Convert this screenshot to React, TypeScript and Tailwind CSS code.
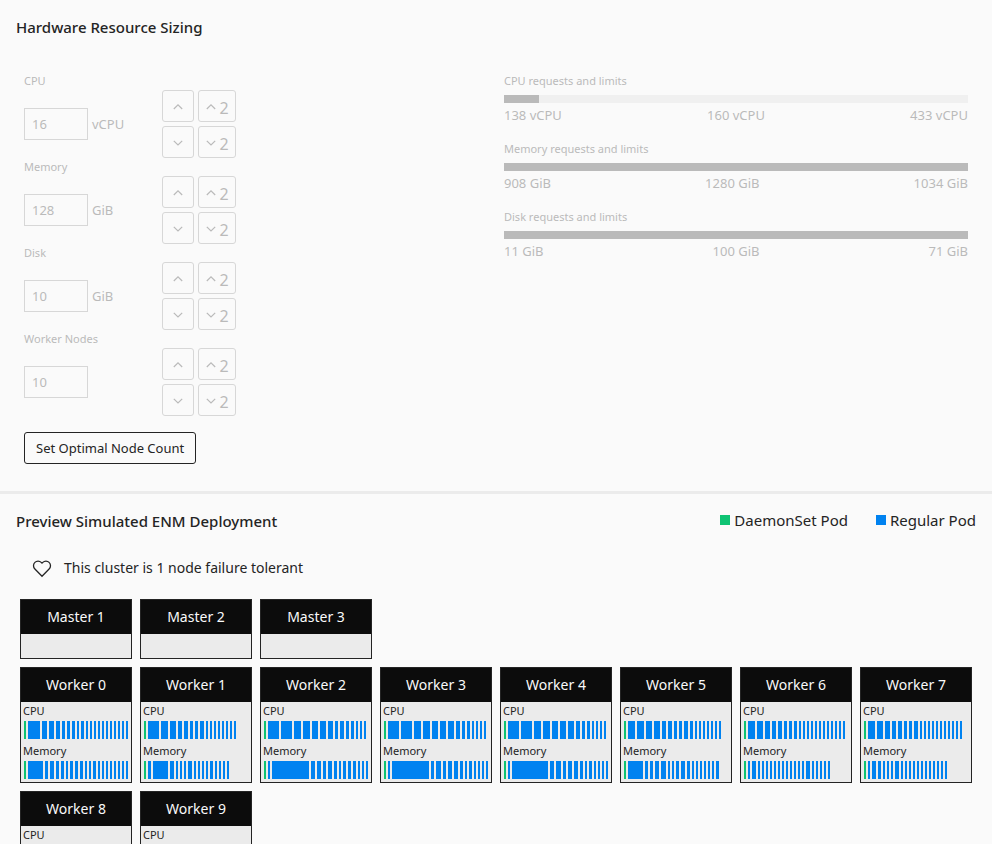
import React from "react";

type Resource = { id: string; label: string; value: string; unit: string };

const resources: Resource[] = [
  { id: "cpu", label: "CPU", value: "16", unit: "vCPU" },
  { id: "memory", label: "Memory", value: "128", unit: "GiB" },
  { id: "disk", label: "Disk", value: "10", unit: "GiB" },
  { id: "nodes", label: "Worker Nodes", value: "10", unit: "" },
];

const meters = [
  { label: "CPU requests and limits", min: "138 vCPU", mid: "160 vCPU", max: "433 vCPU", percent: 7.5 },
  { label: "Memory requests and limits", min: "908 GiB", mid: "1280 GiB", max: "1034 GiB", percent: 100 },
  { label: "Disk requests and limits", min: "11 GiB", mid: "100 GiB", max: "71 GiB", percent: 100 },
];

const small = (count: number): number[] => Array(count).fill(2);

// Pod widths in pixels; the daemon set pod is drawn ahead of them.
const workers: { cpu: number[]; memory: number[] }[] = [
  { cpu: [12, 5, 5, 4, 3, 3, 3, 2, 3, ...small(11)], memory: [15, 3, 4, 3, 3, 2, 3, 3, 3, 2, 2, 3, ...small(8)] },
  { cpu: [11, 7, 6, 4, 4, 3, 3, 4, ...small(8)], memory: [3, 15, 4, 2, 2, 2, 4, 2, 2, 2, 2, 3, ...small(4)] },
  { cpu: [11, 11, 7, 7, 6, 6, 5, 3, 4, 3, 3, ...small(3)], memory: [2, 37, 4, 4, 3, 4, 3, 2, 3, 3, 3, ...small(3)] },
  { cpu: [11, 11, 7, 7, 6, 6, 6, 4, 3, 3, ...small(4)], memory: [2, 37, 3, 5, 3, 4, 4, 3, 2, 3, ...small(4)] },
  { cpu: [11, 11, 7, 7, 6, 6, 6, 4, 3, 3, ...small(4)], memory: [2, 36, 4, 5, 3, 4, 4, 3, 2, 3, ...small(4)] },
  { cpu: [7, 7, 6, 6, 4, 4, 3, 3, 4, 3, ...small(7)], memory: [15, 3, 3, 4, 5, 2, 2, 3, 4, 3, ...small(6), 3] },
  { cpu: [7, 6, 5, 4, 4, 3, 3, 3, ...small(12)], memory: [2, 4, ...small(12), 4, ...small(5)] },
  { cpu: [7, 6, 5, 4, 4, 3, 3, 4, ...small(11)], memory: [2, 4, 3, 2, 2, 2, 4, ...small(12)] },
  { cpu: [7, 6, 5, 4, 4, 3, 3, 3, ...small(11)], memory: [2, 4, 3, 2, 2, 2, 4, ...small(11)] },
  { cpu: [7, 6, 5, 4, 4, 3, 3, 3, ...small(11)], memory: [2, 4, 3, 2, 2, 2, 4, ...small(11)] },
];

function Chevron({ down = false }: { down?: boolean }) {
  return (
    <svg width="16" height="16" viewBox="0 0 16 16" fill="none" stroke="currentColor" strokeWidth="1.2" aria-hidden="true">
      <path d={down ? "M3.800 6.800l4.200 4.200 4.200-4.200" : "M3.800 11l4.200-4.200 4.200 4.200"} />
    </svg>
  );
}

function StepButton({ down = false, double = false, name }: { down?: boolean; double?: boolean; name: string }) {
  return (
    <button
      type="button"
      disabled
      aria-label={`${down ? "Decrease" : "Increase"} ${name}${double ? " by a factor of 2" : ""}`}
      className={`flex h-8 items-center justify-center rounded-[3px] border border-[#d7d7d7] text-base leading-6 ${double ? "w-[38px] pr-[2px]" : "w-8"}`}
    >
      <Chevron down={down} />
      {double && <span className="pt-1">2</span>}
    </button>
  );
}

function ResourceRow({ id, label, value, unit }: Resource) {
  return (
    <div className="flex h-[86px]">
      <div className="w-[138px]">
        <label htmlFor={id} className="block text-[11px] leading-4">
          {label}
        </label>
        <div className="mt-[19px] flex items-center gap-1 text-[13px] leading-5">
          <input id={id} disabled defaultValue={value} className="h-8 w-16 border border-[#d7d7d7] px-[7px]" />
          <span>{unit}</span>
        </div>
      </div>
      <div className="grid content-start grid-cols-[auto_auto] gap-1 pt-[17px]">
        <StepButton name={label} />
        <StepButton name={label} double />
        <StepButton name={label} down />
        <StepButton name={label} down double />
      </div>
    </div>
  );
}

function PodStrip({ label, pods }: { label: string; pods: number[] }) {
  return (
    <div className="h-10 pl-[3px]">
      <div className="-ml-px pb-[2px] text-[11px] leading-[17px]">{label}</div>
      <div className="flex h-[18px] gap-[2px]">
        <span className="w-[2px] shrink-0 bg-[#0fc373]" />
        {pods.map((width, i) => (
          <span key={i} className="shrink-0 bg-[#0082f0]" style={{ width }} />
        ))}
      </div>
    </div>
  );
}

function NodeCard({ title, children }: { title: string; children?: React.ReactNode }) {
  return (
    <article className="w-28 border border-[#242424] bg-[#ebebeb]">
      <h3 className="bg-[#0c0c0c] text-center text-[14px] leading-[34px] text-[#fafafa]">{title}</h3>
      {children ?? <div className="h-6" />}
    </article>
  );
}

export default function App() {
  return (
    <main className="h-screen overflow-hidden bg-[#fafafa] font-['Noto_Sans','Open_Sans',sans-serif] text-[#242424]">
      <section className="border-b-3 border-[#ebebeb] px-4 pt-4 pb-[27px]">
        <h2 className="text-[15px] leading-[22px] font-medium">Hardware Resource Sizing</h2>
        <div className="grid grid-cols-2 px-2 pt-[35px] text-[#bababa]">
          <div>
            {resources.map((r) => (
              <ResourceRow key={r.id} {...r} />
            ))}
            <button
              type="button"
              className="mt-[15px] h-8 rounded-[3px] border border-[#242424] px-[11px] text-[13px] leading-5 text-[#242424]"
            >
              Set Optimal Node Count
            </button>
          </div>
          <div className="flex flex-col gap-[18px] pl-2">
            {meters.map((m) => (
              <div key={m.label}>
                <div className="text-[11px] leading-4">{m.label}</div>
                <div className="mt-[6px] h-2 bg-[#f0f0f0]">
                  <div className="h-2 bg-[#bababa]" style={{ width: `${m.percent}%` }} />
                </div>
                <div className="flex justify-between pt-1 text-[13px] leading-4">
                  <span>{m.min}</span>
                  <span>{m.mid}</span>
                  <span>{m.max}</span>
                </div>
              </div>
            ))}
          </div>
        </div>
      </section>

      <section className="px-4 pt-4">
        <div className="flex items-start justify-between">
          <h2 className="text-[15px] leading-[22px] font-medium">Preview Simulated ENM Deployment</h2>
          <ul className="flex gap-7 text-[15px] leading-5">
            <li className="flex items-center gap-1">
              <span className="size-[10px] bg-[#0fc373]" />
              DaemonSet Pod
            </li>
            <li className="flex items-center gap-1">
              <span className="size-[10px] bg-[#0082f0]" />
              Regular Pod
            </li>
          </ul>
        </div>

        <p className="mt-6 flex items-center gap-3 pl-4 text-[14px] leading-6">
          <svg width="20" height="20" viewBox="0 0 20 20" fill="none" stroke="currentColor" strokeWidth="1.3" aria-hidden="true">
            <path d="M10 18.200 2.900 11A4.600 4.600 0 0 1 2.900 4.400A4.400 4.400 0 0 1 9.200 4.400L10 5.200L10.800 4.400A4.400 4.400 0 0 1 17.100 4.400A4.600 4.600 0 0 1 17.100 11Z" />
          </svg>
          This cluster is 1 node failure tolerant
        </p>

        <div className="mt-[19px] flex flex-wrap gap-2 pl-1">
          {[1, 2, 3].map((n) => (
            <NodeCard key={n} title={`Master ${n}`} />
          ))}
        </div>
        <div className="mt-2 flex flex-wrap gap-2 pl-1">
          {workers.map((w, n) => (
            <NodeCard key={n} title={`Worker ${n}`}>
              <PodStrip label="CPU" pods={w.cpu} />
              <PodStrip label="Memory" pods={w.memory} />
            </NodeCard>
          ))}
        </div>
      </section>
    </main>
  );
}
